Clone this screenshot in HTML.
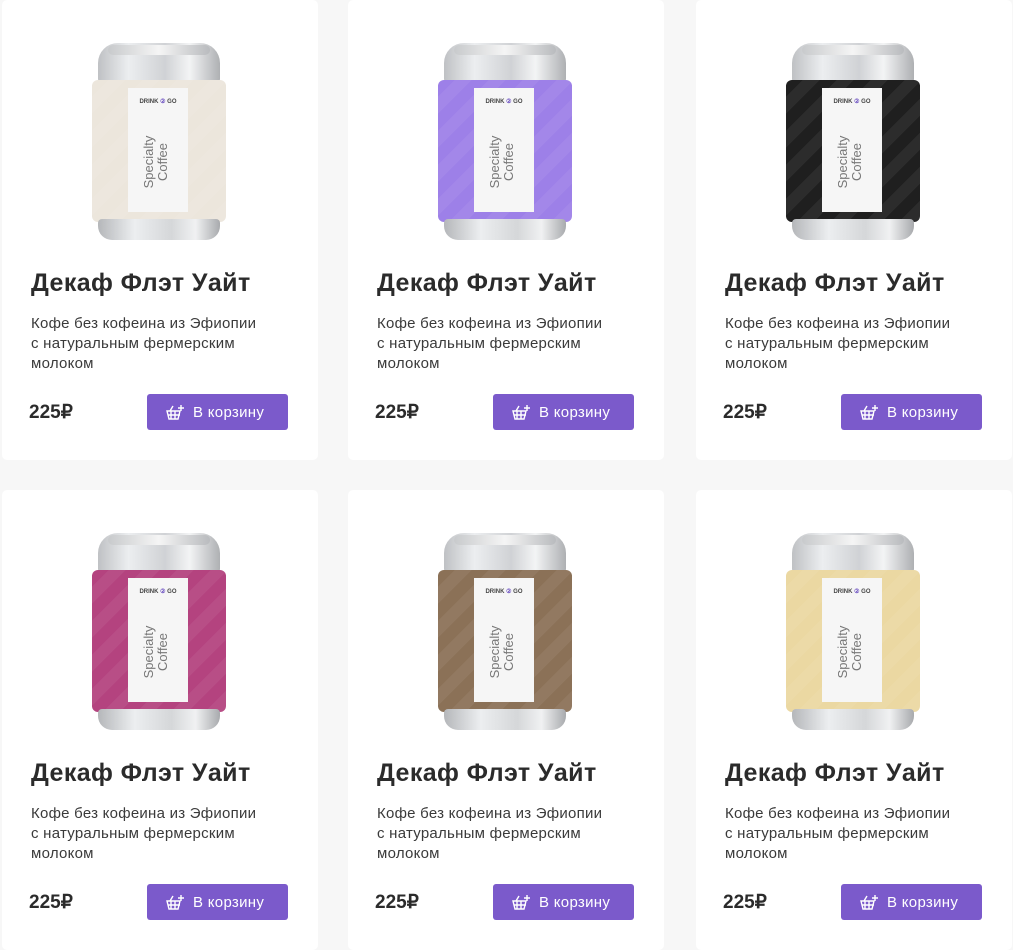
<!DOCTYPE html><html><head><meta charset="utf-8"><style>
body{margin:0;background:#f7f7f7;font-family:"Liberation Sans",sans-serif;width:1013px;height:950px;overflow:hidden;position:relative}
.card{position:absolute;width:316px;height:460px;background:#fff;border-radius:5px}
.can{position:absolute;left:90px;top:43px;width:134px;height:197px}
.top{position:absolute;left:6px;right:6px;top:0;height:40px;border-radius:20px 20px 4px 4px;background:linear-gradient(90deg,#bfc1c4,#eceef0 25%,#d0d2d5 55%,#f3f4f5 75%,#aeb0b3)}
.top:before{content:"";position:absolute;left:10px;right:10px;top:2px;height:10px;border-radius:6px;background:linear-gradient(90deg,#c8cacc,#f5f5f5,#b9bbbe)}
.band{position:absolute;left:0;right:0;top:37px;height:142px;border-radius:6px}
.bot{position:absolute;left:6px;right:6px;top:176px;height:21px;border-radius:4px 4px 14px 14px;background:linear-gradient(90deg,#b5b7ba,#eceef0 30%,#d5d7d9 60%,#f0f1f2 80%,#a8aaad)}
.lab{position:absolute;left:36px;top:45px;width:60px;height:124px;background:#f6f6f6}
.logo{position:absolute;left:0;right:0;top:10px;text-align:center;font-size:6px;font-weight:bold;color:#444}
.sp{position:absolute;left:-12px;top:60px;transform:rotate(-90deg);font-size:13px;color:#777;line-height:14px;white-space:nowrap;width:80px;text-align:center}
h2{position:absolute;left:29px;top:269px;margin:0;font-size:25px;color:#2b2b2b;font-weight:bold;letter-spacing:0.4px}
p{position:absolute;left:29px;top:314px;margin:0;font-size:15px;line-height:20px;color:#3a3a3a;letter-spacing:0.25px}
.pr{position:absolute;left:27px;top:401px;font-size:19px;font-weight:bold;color:#2b2b2b}
.btn{position:absolute;left:145px;top:394px;width:141px;height:36px;background:#7b5acb;border-radius:3px;color:#fff;font-size:15px;line-height:37px;letter-spacing:0.3px}
.btn svg{position:absolute;left:18px;top:9px}
.btn span{position:absolute;left:46px}
</style></head><body>
<script>
const cols=["#ece6dc","#9d80e8","#1f1f1f","#b4437f","#8b7157","#ebd8a2"];
const pos=[[2,0],[348,0],[696,0],[2,490],[348,490],[696,490]];
let h="";
pos.forEach((p,i)=>{h+=`<div class="card" style="left:${p[0]}px;top:${p[1]}px">
<div class="can"><div class="top"></div><div class="band" style="background:repeating-linear-gradient(135deg,${cols[i]} 0 12px,rgba(255,255,255,.06) 12px 24px),${cols[i]}"></div><div class="bot"></div>
<div class="lab"><div class="logo">DRINK <span style="color:#6a4fc0">②</span> GO</div><div class="sp">Specialty<br>Coffee</div></div></div>
<h2>Декаф Флэт Уайт</h2><p>Кофе без кофеина из Эфиопии<br>с натуральным фермерским<br>молоком</p>
<div class="pr">225₽</div>
<div class="btn"><svg width="22" height="18" viewBox="0 0 22 18" fill="none" stroke="#fff" stroke-width="1.4"><path d="M2 8h13l-2 8H4z M5 8l3-5 M6 8v8 M10 8v8 M3 12h12"/><path d="M16 2v6 M13 5h6"/></svg><span>В корзину</span></div></div>`});
document.write(h);
</script>
</body></html>
